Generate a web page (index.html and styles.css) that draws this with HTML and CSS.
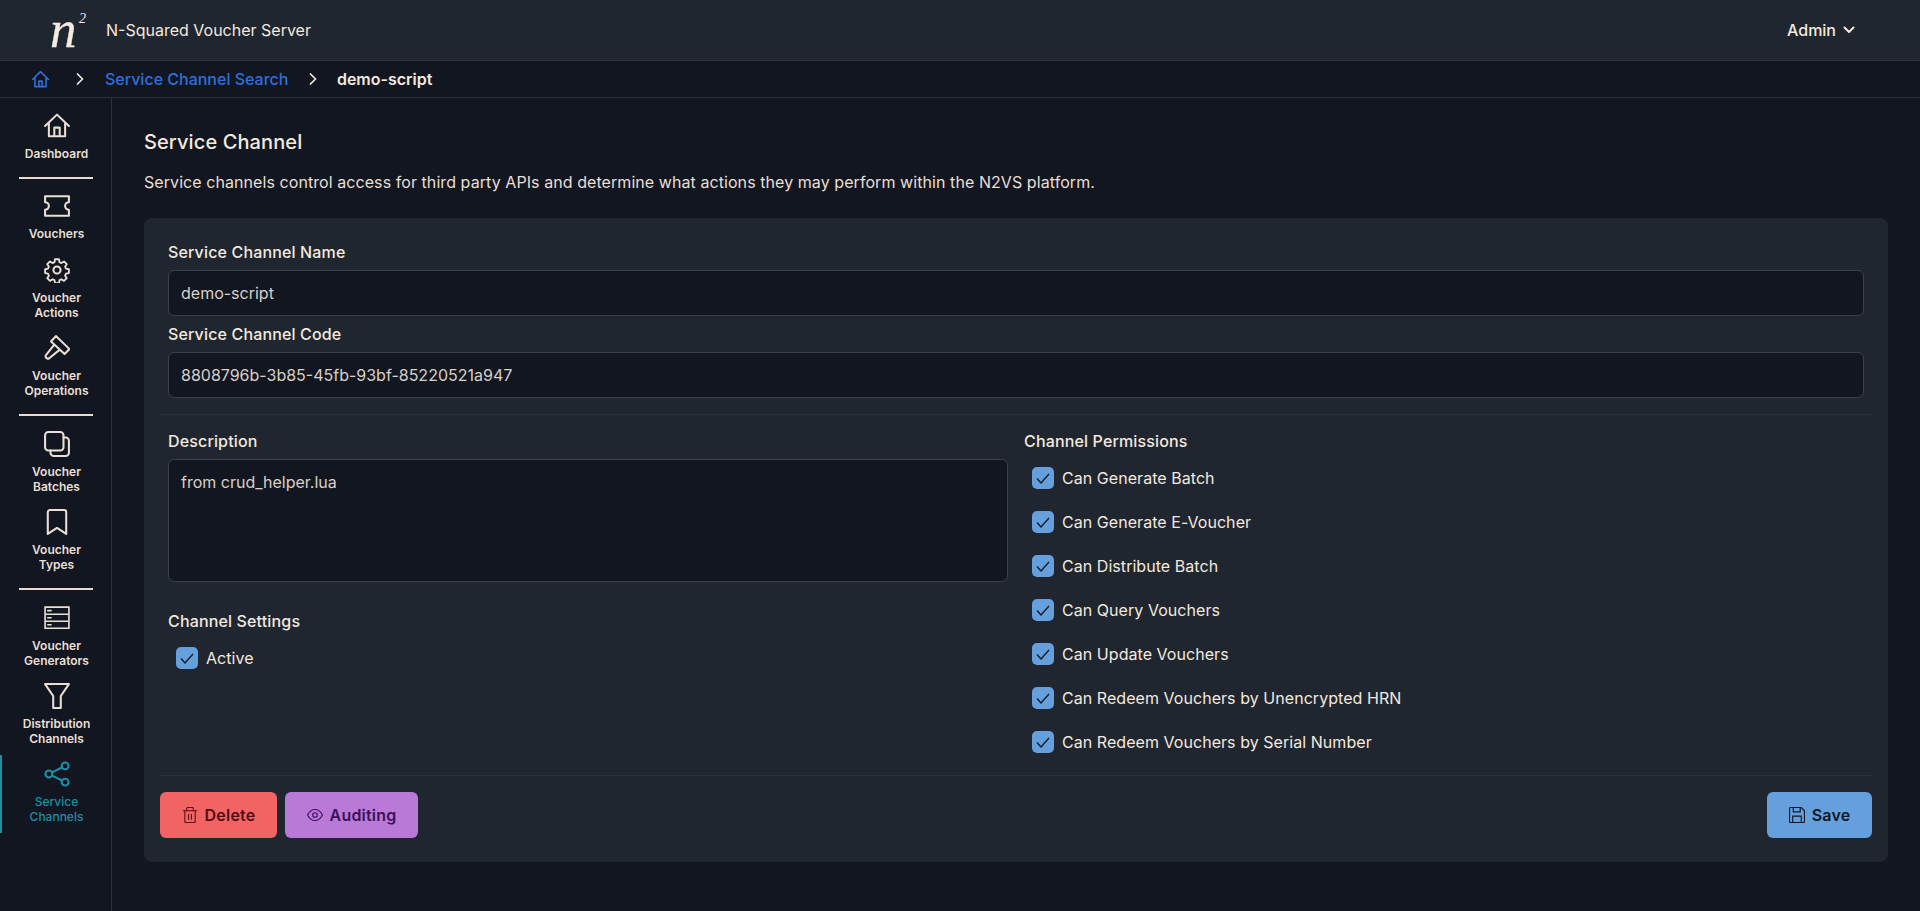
FILE: index.html
```html
<!DOCTYPE html>
<html lang="en">
<head>
<meta charset="utf-8">
<title>N-Squared Voucher Server</title>
<link rel="stylesheet" href="styles.css">
</head>
<body>
<header class="topbar">
  <div class="brand"><svg class="logo" viewBox="0 0 56 60"><text class="logo-n" x="0" y="47.300">n</text><text class="logo-2" x="29" y="23">2</text></svg></div>
  <div class="app-name">N-Squared Voucher Server</div>
  <div class="user">Admin
    <svg class="user-chev" viewBox="0 0 12 8" fill="none"><path d="M1.500 1.500 6 6l4.500-4.500" stroke="currentColor" stroke-width="2" stroke-linecap="round" stroke-linejoin="round"/></svg>
  </div>
</header>
<nav class="crumbs">
  <svg class="crumb-home" viewBox="0 0 24 24" fill="none" stroke="currentColor" stroke-width="2" stroke-linecap="round" stroke-linejoin="round"><path d="M2 12 12 2l10 10M5 9.500V21h14V9.500M10 21v-7h4v7"/></svg>
  <svg class="crumb-sep first" viewBox="0 0 8 12" fill="none"><path d="M1.500 1 6.500 6l-5 5" stroke="currentColor" stroke-width="1.700" stroke-linecap="round" stroke-linejoin="round"/></svg>
  <a class="crumb-link">Service Channel Search</a>
  <svg class="crumb-sep second" viewBox="0 0 8 12" fill="none"><path d="M1.500 1 6.500 6l-5 5" stroke="currentColor" stroke-width="1.700" stroke-linecap="round" stroke-linejoin="round"/></svg>
  <span class="crumb-current">demo-script</span>
</nav>
<div class="shell">
  <aside class="side">
    <a class="nav">
      <svg viewBox="0 0 24 24"><path d="M1 12 12 1.500 23 12M4.500 9.500V21.500h15V9.500M9.500 21.500v-8h5v8"/></svg>
      <span>Dashboard</span>
    </a>
    <hr class="nav-sep">
    <a class="nav">
      <svg viewBox="0 0 24 24"><path d="M1 3h22v5.500a3.500 3.500 0 0 0 0 7V21H1v-5.500a3.500 3.500 0 0 0 0-7z"/></svg>
      <span>Vouchers</span>
    </a>
    <a class="nav">
      <svg viewBox="0 0 24 24"><path d="M10 1.500h4l.6 3 2 .9 2.600-1.700 2.800 2.800-1.700 2.600.9 2 3 .6v4l-3 .6-.9 2 1.700 2.600-2.800 2.800-2.600-1.700-2 .9-.6 3h-4l-.6-3-2-.9-2.600 1.700-2.800-2.800 1.700-2.600-.9-2-3-.6v-4l3-.6.9-2-1.700-2.600 2.800-2.800 2.600 1.700 2-.9z" transform="translate(12 12) scale(.9) translate(-12 -12.500)"/><circle cx="12" cy="12" r="3.300"/></svg>
      <span>Voucher<br>Actions</span>
    </a>
    <a class="nav">
      <svg viewBox="0 0 24 24"><path d="M11 1 23.500 13 19 17.500 6.500 6zM9 9.500 1.800 18.500a2.200 2.200 0 0 0 3 3L14 14"/></svg>
      <span>Voucher<br>Operations</span>
    </a>
    <hr class="nav-sep">
    <a class="nav">
      <svg viewBox="0 0 24 24"><rect x="1" y="1" width="17" height="17" rx="3"/><path d="M18 6h2a3 3 0 0 1 3 3v11a3 3 0 0 1-3 3H9a3 3 0 0 1-3-3v-2"/></svg>
      <span>Voucher<br>Batches</span>
    </a>
    <a class="nav">
      <svg viewBox="0 0 24 24"><path d="M3.500 23V3a2 2 0 0 1 2-2h13a2 2 0 0 1 2 2v20L12 17.500z"/></svg>
      <span>Voucher<br>Types</span>
    </a>
    <hr class="nav-sep">
    <a class="nav">
      <svg viewBox="0 0 24 24"><path class="thin" d="M1 2h22v6.500H1zM1 8.500h22v6.500H1zM1 15h22v6.500H1z"/><path class="thin" d="M3.500 5.200h3M3.500 11.800h3M3.500 18.200h3"/></svg>
      <span>Voucher<br>Generators</span>
    </a>
    <a class="nav">
      <svg viewBox="0 0 24 24"><path d="M1 1h22l-7.500 11v11h-7V12z"/></svg>
      <span>Distribution<br>Channels</span>
    </a>
    <a class="nav active">
      <svg viewBox="0 0 24 24"><circle cx="19.500" cy="4.500" r="3.200"/><circle cx="4.500" cy="12" r="3.200"/><circle cx="19.500" cy="19.500" r="3.200"/><path d="m7.500 10.500 9-4.500M7.500 13.500l9 4.500"/></svg>
      <span>Service<br>Channels</span>
    </a>
  </aside>
  <main class="main">
    <h1 class="page-title">Service Channel</h1>
    <p class="page-desc">Service channels control access for third party APIs and determine what actions they may perform within the N2VS platform.</p>
    <section class="card">
      <div class="fields">
        <label class="label">Service Channel Name</label>
        <input class="input" value="demo-script">
        <label class="label second-label">Service Channel Code</label>
        <input class="input" value="8808796b-3b85-45fb-93bf-85220521a947">
      </div>
      <hr class="rule">
      <div class="columns">
        <div class="col-left">
          <label class="label">Description</label>
          <textarea class="textarea">from crud_helper.lua</textarea>
          <div class="label settings-label">Channel Settings</div>
          <div class="check"><span class="box"><svg viewBox="0 0 22 22" fill="none"><path d="m5 11.500 4 4.500 8-9" stroke="currentColor" stroke-width="1.300"/></svg></span>Active</div>
        </div>
        <div class="col-right">
          <div class="label">Channel Permissions</div>
          <div class="perms">
            <div class="check"><span class="box"><svg viewBox="0 0 22 22" fill="none"><path d="m5 11.500 4 4.500 8-9" stroke="currentColor" stroke-width="1.300"/></svg></span>Can Generate Batch</div>
            <div class="check"><span class="box"><svg viewBox="0 0 22 22" fill="none"><path d="m5 11.500 4 4.500 8-9" stroke="currentColor" stroke-width="1.300"/></svg></span>Can Generate E-Voucher</div>
            <div class="check"><span class="box"><svg viewBox="0 0 22 22" fill="none"><path d="m5 11.500 4 4.500 8-9" stroke="currentColor" stroke-width="1.300"/></svg></span>Can Distribute Batch</div>
            <div class="check"><span class="box"><svg viewBox="0 0 22 22" fill="none"><path d="m5 11.500 4 4.500 8-9" stroke="currentColor" stroke-width="1.300"/></svg></span>Can Query Vouchers</div>
            <div class="check"><span class="box"><svg viewBox="0 0 22 22" fill="none"><path d="m5 11.500 4 4.500 8-9" stroke="currentColor" stroke-width="1.300"/></svg></span>Can Update Vouchers</div>
            <div class="check"><span class="box"><svg viewBox="0 0 22 22" fill="none"><path d="m5 11.500 4 4.500 8-9" stroke="currentColor" stroke-width="1.300"/></svg></span>Can Redeem Vouchers by Unencrypted HRN</div>
            <div class="check"><span class="box"><svg viewBox="0 0 22 22" fill="none"><path d="m5 11.500 4 4.500 8-9" stroke="currentColor" stroke-width="1.300"/></svg></span>Can Redeem Vouchers by Serial Number</div>
          </div>
        </div>
      </div>
      <hr class="rule bottom-rule">
      <div class="actions">
        <button class="btn btn-delete">
          <svg viewBox="0 0 16 17" fill="none" stroke="currentColor" stroke-width="1.100"><path d="M.5 4h15M2.500 4v11.500a1 1 0 0 0 1 1h9a1 1 0 0 0 1-1V4M4.500 4V1.500a1 1 0 0 1 1-1h5a1 1 0 0 1 1 1V4M6.500 7.500v6M9.500 7.500v6"/></svg>
          Delete
        </button>
        <button class="btn btn-audit">
          <svg viewBox="0 0 16 12" fill="none" stroke="currentColor" stroke-width="1.100"><path d="M.5 6C2.500 2.300 5 .5 8 .5s5.500 1.800 7.500 5.500c-2 3.700-4.500 5.500-7.500 5.500S2.500 9.700.5 6z"/><circle cx="8" cy="6" r="2.300"/></svg>
          Auditing
        </button>
        <button class="btn btn-save">
          <svg viewBox="0 0 15 15" fill="none" stroke="currentColor" stroke-width="1.100"><path d="M1.500.5h10l3 3v10a1 1 0 0 1-1 1h-12a1 1 0 0 1-1-1v-12a1 1 0 0 1 1-1zM4 .5v4h6.500v-4M3.500 14.500V8.500h8v6"/></svg>
          Save
        </button>
      </div>
    </section>
  </main>
</div>
</body>
</html>
```
FILE: styles.css
```css
* { box-sizing: border-box; }
html, body { height: 100%; }
body {
  margin: 0;
  background: #111620;
  color: #f3e9df;
  font-family: Inter, "Noto Sans", sans-serif;
  font-size: 16px;
  overflow: hidden;
}
.topbar {
  height: 61px;
  display: flex;
  align-items: center;
  background: #1f2630;
  border-bottom: 1px solid #2c323c;
}
.brand {
  width: 106px;
  flex: none;
  padding-left: 50px;
  height: 60px;
}
.logo { display: block; width: 56px; height: 60px; }
.logo text {
  font-family: "Liberation Serif", serif;
  font-style: italic;
  fill: #f5ebe0;
}
.logo-n { font-size: 53px; stroke: #f5ebe0; stroke-width: .3px; }
.logo-2 { font-size: 14px; }
.app-name { font-size: 16px; flex: 1; }
.user { display: flex; align-items: center; gap: 7px; font-weight: 500; padding-right: 65px; }
.user-chev { width: 12px; height: 8px; }
.crumbs {
  height: 37px;
  display: flex;
  align-items: center;
  padding-left: 30.500px;
  border-bottom: 1px solid #2c323c;
}
.crumb-home { width: 19px; height: 19px; color: #2f6fdc; }
.crumb-sep { width: 8px; height: 12px; color: #f3e9df; }
.crumb-sep.first { margin: 0 21px 0 26.500px; }
.crumb-sep.second { margin: 0 20px 0 20.500px; }
.crumb-link { color: #2f6fdc; font-weight: 500; }
.crumb-current { font-weight: 600; }
.shell { display: flex; height: 813px; }
.side {
  width: 112px;
  flex: none;
  padding-top: 8.500px;
  border-right: 1px solid #2c323c;
}
.nav {
  display: flex;
  flex-direction: column;
  align-items: center;
  padding: 6px 0 9.250px;
  border-left: 2px solid transparent;
  font-size: 12px;
  line-height: 15px;
  font-weight: 600;
  text-align: center;
  color: #e9dfd5;
}
.nav svg {
  width: 26px;
  height: 26px;
  margin-bottom: 7px;
  fill: none;
  stroke: currentColor;
  stroke-width: 1.900;
  stroke-linejoin: round;
  stroke-linecap: round;
}
.nav svg .thin { stroke-width: 1.500; stroke-linejoin: miter; }
.nav.active { color: #1f8ea3; border-left-color: #1f8ea3; font-weight: 500; }
.nav-sep {
  width: 74px;
  height: 2px;
  margin: 7.250px 0 8.250px 19px;
  border: 0;
  background: #e9dcd0;
}
.main { flex: 1; padding: 30px 32px 0; }
.page-title { margin: 0; font-size: 20px; line-height: 28px; font-weight: 500; letter-spacing: .1px; }
.page-desc { margin: 14px 0 0; line-height: 24px; color: #e9dfd5; letter-spacing: .07px; }
.card {
  margin-top: 24px;
  height: 644px;
  padding: 24px 16px;
  background: #1f2630;
  border-radius: 8px;
}
.fields { padding: 0 8px; }
.label { display: block; font-weight: 500; line-height: 20px; letter-spacing: .15px; }
.second-label { margin-top: 8px; }
.input, .textarea {
  display: block;
  width: 100%;
  margin-top: 8px;
  padding: 0 12px;
  background: #111620;
  border: 1px solid #3a414c;
  border-radius: 6px;
  color: #d9d0c7;
  font: 16px/24px Inter, "Noto Sans", sans-serif;
}
.input { height: 46px; }
.textarea { height: 123px; padding-top: 10px; resize: none; outline: 0; }
.rule { margin: 16px 0; border: 0; border-top: 1px solid #2c323c; }
.columns { display: grid; grid-template-columns: 848px 1fr; padding-left: 8px; height: 344px; }
.col-left { padding-right: 8px; }
.settings-label { margin-top: 29px; }
.check {
  display: flex;
  align-items: center;
  gap: 8px;
  height: 22px;
  margin: 16px 0 0 8px;
  color: #f3e9df;
  letter-spacing: .05px;
}
.box {
  width: 22px;
  height: 22px;
  flex: none;
  background: #659fdc;
  border-radius: 5px;
  color: #0f1826;
}
.box svg { display: block; width: 22px; height: 22px; }
.col-right { padding-left: 8px; }
.perms { display: flex; flex-direction: column; gap: 22px; margin-top: 16px; }
.perms .check { margin-top: 0; }
.bottom-rule { margin: 0 0 16px; }
.actions { display: flex; gap: 8px; }
.btn {
  display: flex;
  align-items: center;
  justify-content: center;
  gap: 7px;
  height: 46px;
  border: 0;
  border-radius: 6px;
  font: 600 16px Inter, "Noto Sans", sans-serif;
  letter-spacing: .2px;
}
.btn svg { width: 16px; height: 16px; }
.btn-delete { width: 117px; background: #f26464; color: #520c14; }
.btn-audit { width: 133px; background: #b87ad6; color: #3d0f5a; }
.btn-save { width: 105px; margin-left: auto; background: #659fdc; color: #0e1726; }
```
